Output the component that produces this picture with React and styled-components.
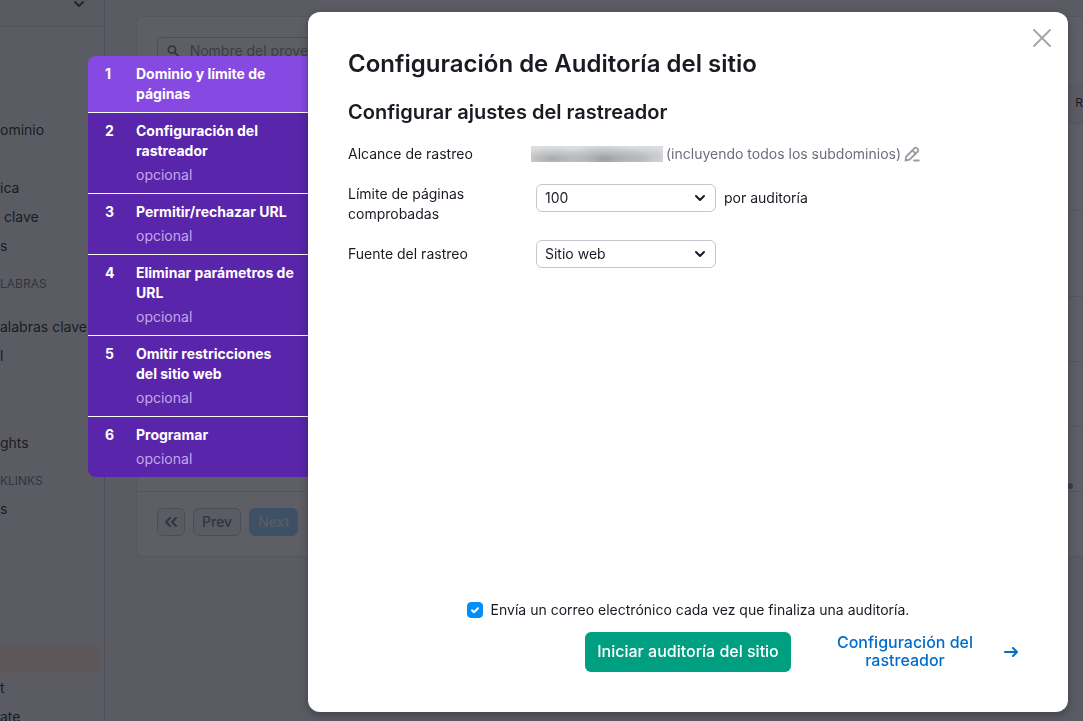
import React, { useState } from 'react';
import styled, { createGlobalStyle } from 'styled-components';

const GlobalStyle = createGlobalStyle`
  * {
    box-sizing: border-box;
  }

  body {
    margin: 0;
    overflow: hidden;
    font-family: Inter, 'Liberation Sans', sans-serif;
    font-size: 14px;
    line-height: 20px;
    color: #191b23;
  }

  button,
  select {
    font: inherit;
    color: inherit;
  }
`;

const Page = styled.div`
  display: flex;
  height: 100vh;
  overflow: hidden;
  background-color: #f4f5f9;
`;

/* ---------- page behind the dialog ---------- */

const Sidebar = styled.aside`
  flex: 0 0 105px;
  border-right: 1px solid #c4c7cf;
  overflow: hidden;
`;

const SidebarHeader = styled.div`
  display: flex;
  justify-content: flex-end;
  height: 27px;
  padding: 0 19px;
  border-bottom: 1px solid #d1d4db;
  background-color: #e9ebf2;
`;

const NavGroup = styled.nav`
  display: flex;
  flex-direction: column;
  margin-top: ${props => props.$space}px;
`;

const NavLink = styled.a`
  height: 29px;
  margin-right: 4px;
  line-height: 29px;
  white-space: pre;
  color: #191b23;
  text-decoration: none;
  border-radius: 0 6px 6px 0;
  background-color: ${props => (props.$active ? '#ffe4d8' : 'transparent')};
`;

const NavTitle = styled.span`
  height: ${props => (props.$tall ? 52 : 37)}px;
  padding-top: 16px;
  font-size: 12px;
  line-height: 15px;
  color: #6c6e79;
`;

const Main = styled.main`
  flex: 1;
  min-width: 0;
  padding: 16px 0 0 31px;
`;

const Card = styled.section`
  border: 1px solid #e0e1e9;
  border-right: 0;
  border-radius: 6px 0 0 6px;
  background-color: #fff;
`;

const SearchBox = styled.label`
  display: flex;
  align-items: center;
  gap: 10px;
  width: 240px;
  height: 28px;
  margin: 20px 20px 19px;
  padding-left: 9px;
  border: 1px solid #c4c7cf;
  border-radius: 6px;
  color: #6c6e79;
`;

const SearchInput = styled.input`
  width: 100%;
  border: 0;
  padding: 0;
  background: none;
  font: inherit;

  &::placeholder {
    color: #8a8e9b;
    opacity: 1;
  }
`;

const Projects = styled.table`
  width: 100%;
  border-collapse: collapse;
  text-align: right;

  th {
    height: 39px;
    padding: 0;
    font-size: 12px;
    font-weight: 400;
    background-color: #f4f5f9;
    border-bottom: 1px solid #e0e1e9;
  }

  td {
    padding: 0 10px 2px;
    vertical-align: bottom;
    border-bottom: 1px solid #e0e1e9;
  }
`;

const Dot = styled.span`
  display: block;
  width: 6px;
  height: 6px;
  margin-left: auto;
  border-radius: 3px;
  background-color: #8a8e9b;
`;

const Pager = styled.div`
  display: flex;
  gap: 8px;
  padding: 16px 20px 20px;
`;

const PagerButton = styled.button`
  display: flex;
  align-items: center;
  height: 28px;
  padding: 0 ${props => (props.$icon ? 6 : 8)}px;
  border: 1px solid ${props => (props.$primary ? '#8fcbff' : '#c4c7cf')};
  border-radius: 6px;
  background-color: ${props => (props.$primary ? '#8fcbff' : '#f4f5f9')};
  color: ${props => (props.$primary ? '#e8f5ff' : '#6c6e79')};
  font-weight: 500;
`;

/* ---------- dialog ---------- */

const Overlay = styled.div`
  position: fixed;
  inset: 0;
  display: flex;
  align-items: stretch;
  padding: 12px 15px 9px 88px;
  background-color: rgba(25, 27, 35, 0.7);
`;

const Steps = styled.ol`
  flex: 0 0 220px;
  align-self: flex-start;
  margin: 44px 0 0;
  padding: 0;
  list-style: none;
  border-radius: 8px 0 0 8px;
  overflow: hidden;
  color: #fff;
`;

const Step = styled.li`
  display: grid;
  grid-template-columns: 31px 1fr;
  padding: 8px 13px 8px 17px;
  font-weight: 700;
  background-color: ${props => (props.$active ? '#8649e1' : '#5925ab')};

  & + & {
    border-top: 1px solid #fff;
  }
`;

const Optional = styled.span`
  display: block;
  margin-top: 4px;
  font-weight: 400;
  color: #c5a8ea;
`;

const Panel = styled.form`
  position: relative;
  flex: 1;
  display: flex;
  flex-direction: column;
  padding: 40px;
  border-radius: 12px;
  background-color: #fff;
  box-shadow: 0 3px 8px rgba(25, 27, 35, 0.4);
`;

const CloseButton = styled.button`
  position: absolute;
  top: 16px;
  right: 16px;
  display: flex;
  padding: 0;
  border: 0;
  background: none;
  color: #a2a3a8;
`;

const Title = styled.h1`
  margin: 0 0 24px;
  font-size: 24px;
  line-height: 24px;
  font-weight: 600;
`;

const Subtitle = styled.h2`
  margin: 0 0 16px;
  font-size: 20px;
  line-height: 24px;
  font-weight: 600;
`;

const Fields = styled.div`
  display: flex;
  flex-direction: column;
  gap: 16px;
`;

const Field = styled.div`
  display: grid;
  grid-template-columns: 183px 1fr;
  align-items: ${props => (props.$top ? 'start' : 'center')};
  min-height: 28px;
`;

const FieldLabel = styled.label`
  max-width: 150px;
`;

const Scope = styled.span`
  display: flex;
  align-items: center;
  gap: 3px;
  color: #6c6e79;
`;

const HiddenDomain = styled.span`
  width: 132px;
  height: 16px;
  background:
    radial-gradient(ellipse 38px 12px at 22px 13px, #a8a9ac, transparent),
    radial-gradient(ellipse 46px 14px at 74px 13px, #9c9da1, transparent),
    radial-gradient(ellipse 30px 12px at 112px 12px, #bcbdbf, transparent),
    #dcddde;
`;

const EditButton = styled.button`
  display: flex;
  padding: 0;
  border: 0;
  background: none;
  color: #9a9ca5;
`;

const Control = styled.div`
  display: flex;
  align-items: center;
  gap: 8px;
  padding-left: 5px;
`;

const SelectWrapper = styled.span`
  display: grid;
  grid-template-columns: 1fr 26px;
  align-items: center;
  width: 180px;

  select {
    grid-area: 1 / 1 / 2 / 3;
    appearance: none;
    width: 100%;
    height: 28px;
    padding: 0 26px 0 8px;
    border: 1px solid #c4c7cf;
    border-radius: 6px;
    background-color: #fff;
  }

  svg {
    grid-area: 1 / 2;
    justify-self: start;
    margin-left: 4px;
    pointer-events: none;
  }
`;

const Footer = styled.footer`
  display: flex;
  flex-direction: column;
  gap: 12px;
  margin-top: auto;
`;

const Notify = styled.label`
  display: flex;
  justify-content: center;
  align-items: center;
  gap: 8px;
`;

const CheckWrapper = styled.span`
  display: grid;

  input {
    grid-area: 1 / 1;
    appearance: none;
    width: 16px;
    height: 16px;
    margin: 0;
    border: 1px solid #c4c7cf;
    border-radius: 4px;
  }

  input:checked {
    border-color: #008ff8;
    background-color: #008ff8;
  }

  svg {
    grid-area: 1 / 1;
    pointer-events: none;
  }
`;

const Actions = styled.div`
  display: grid;
  grid-template-columns: 1fr auto 1fr;
  align-items: center;
`;

const StartButton = styled.button`
  grid-column: 2;
  height: 40px;
  padding: 0 12px 2px;
  border: 0;
  border-radius: 6px;
  background-color: #009f81;
  color: #fff;
  font-size: 16px;
  font-weight: 500;
`;

const NextLink = styled.a`
  display: flex;
  align-items: center;
  justify-content: flex-end;
  gap: 18px;
  padding-right: 9px;
  color: #006dca;
  font-size: 16px;
  line-height: 18px;
  font-weight: 500;
  text-align: center;
  text-decoration: none;

  span {
    width: 160px;
    padding-bottom: 2px;
  }
`;

const steps = [
  { title: 'Dominio y límite de páginas' },
  { title: 'Configuración del rastreador', optional: true },
  { title: 'Permitir/rechazar URL', optional: true },
  { title: 'Eliminar parámetros de URL', optional: true },
  { title: 'Omitir restricciones del sitio web', optional: true },
  { title: 'Programar', optional: true },
];

const rowHeights = [87, 86, 65, 65, 65];

function Chevron({ color = 'currentColor' }) {
  return (
    <svg width="12" height="8" viewBox="0 0 12 8" fill="none" stroke={color} strokeWidth="2" strokeLinecap="round" strokeLinejoin="round">
      <path d="M2 2l4 4 4-4" />
    </svg>
  );
}

function Select({ id, options }) {
  return (
    <SelectWrapper>
      <select id={id}>
        {options.map(option => <option key={option}>{option}</option>)}
      </select>
      <Chevron />
    </SelectWrapper>
  );
}

function Background() {
  return (
    <>
      <Sidebar>
        <SidebarHeader>
          <Chevron color="#3a3c45" />
        </SidebarHeader>
        <NavGroup $space={88}>
          <NavLink href="#">ominio</NavLink>
          <NavLink href="#"> </NavLink>
          <NavLink href="#">ica</NavLink>
          <NavLink href="#"> clave</NavLink>
          <NavLink href="#">s</NavLink>
          <NavTitle $tall>LABRAS</NavTitle>
          <NavLink href="#">alabras clave</NavLink>
          <NavLink href="#">l</NavLink>
          <NavLink href="#"> </NavLink>
          <NavLink href="#"> </NavLink>
          <NavLink href="#">ghts</NavLink>
          <NavTitle>KLINKS</NavTitle>
          <NavLink href="#">s</NavLink>
        </NavGroup>
        <NavGroup $space={121}>
          <NavLink href="#" $active> </NavLink>
          <NavLink href="#">t</NavLink>
          <NavLink href="#">ate</NavLink>
        </NavGroup>
      </Sidebar>
      <Main>
        <Card>
          <SearchBox>
            <svg width="14" height="14" viewBox="0 0 14 14" fill="none" stroke="currentColor" strokeWidth="2" strokeLinecap="round">
              <circle cx="5.5" cy="5.5" r="4" />
              <path d="M8.7 8.7l4 4" />
            </svg>
            <SearchInput placeholder="Nombre del proyecto" />
          </SearchBox>
          <Projects>
            <thead>
              <tr><th>R</th></tr>
            </thead>
            <tbody>
              {rowHeights.map((height, index) => (
                <tr key={index}>
                  <td style={{ height }}>{index === rowHeights.length - 1 && <Dot />}</td>
                </tr>
              ))}
            </tbody>
          </Projects>
          <Pager>
            <PagerButton type="button" $icon aria-label="First page">
              <svg width="14" height="12" viewBox="0 0 14 12" fill="none" stroke="currentColor" strokeWidth="2" strokeLinecap="round" strokeLinejoin="round">
                <path d="M6 2L2 6l4 4M12 2L8 6l4 4" />
              </svg>
            </PagerButton>
            <PagerButton type="button">Prev</PagerButton>
            <PagerButton type="button" $primary>Next</PagerButton>
          </Pager>
        </Card>
      </Main>
    </>
  );
}

function App() {
  const [notify, setNotify] = useState(true);

  return (
    <Page>
      <GlobalStyle />
      <Background />
      <Overlay>
        <Steps>
          {steps.map((step, index) => (
            <Step key={step.title} $active={index === 0}>
              <span>{index + 1}</span>
              <div>
                {step.title}
                {step.optional && <Optional>opcional</Optional>}
              </div>
            </Step>
          ))}
        </Steps>
        <Panel onSubmit={event => event.preventDefault()}>
          <CloseButton type="button" aria-label="Cerrar">
            <svg width="20" height="20" viewBox="0 0 20 20" fill="none" stroke="currentColor" strokeWidth="1.8" strokeLinecap="round">
              <path d="M2 2l16 16M18 2L2 18" />
            </svg>
          </CloseButton>
          <Title>Configuración de Auditoría del sitio</Title>
          <Subtitle>Configurar ajustes del rastreador</Subtitle>
          <Fields>
            <Field>
              <span>Alcance de rastreo</span>
              <Scope>
                <HiddenDomain />
                (incluyendo todos los subdominios)
                <EditButton type="button" aria-label="Editar">
                  <svg width="16" height="16" viewBox="0 0 16 16" fill="none" stroke="currentColor" strokeWidth="1.8" strokeLinejoin="round" strokeLinecap="round">
                    <path d="M1.5 14.5l.8-4L10.5 2.2a1.6 1.6 0 0 1 2.3 0l1 1a1.6 1.6 0 0 1 0 2.3L5.5 13.7z" />
                    <path d="M8.5 4.5l3 3M10 14.5h4.8" />
                  </svg>
                </EditButton>
              </Scope>
            </Field>
            <Field $top>
              <FieldLabel htmlFor="limit">Límite de páginas comprobadas</FieldLabel>
              <Control>
                <Select id="limit" options={['100', '500', '1000']} />
                por auditoría
              </Control>
            </Field>
            <Field>
              <FieldLabel htmlFor="source">Fuente del rastreo</FieldLabel>
              <Control>
                <Select id="source" options={['Sitio web']} />
              </Control>
            </Field>
          </Fields>
          <Footer>
            <Notify>
              <CheckWrapper>
                <input type="checkbox" checked={notify} onChange={event => setNotify(event.target.checked)} />
                {notify && (
                  <svg width="16" height="16" viewBox="0 0 16 16" fill="none" stroke="#fff" strokeWidth="2" strokeLinecap="round" strokeLinejoin="round">
                    <path d="M5 8.2l2 2 4-4" />
                  </svg>
                )}
              </CheckWrapper>
              Envía un correo electrónico cada vez que finaliza una auditoría.
            </Notify>
            <Actions>
              <StartButton type="submit">Iniciar auditoría del sitio</StartButton>
              <NextLink href="#">
                <span>Configuración del rastreador</span>
                <svg width="16" height="12" viewBox="0 0 16 12" fill="none" stroke="currentColor" strokeWidth="2" strokeLinecap="round" strokeLinejoin="round">
                  <path d="M2 6h12M10 2l4 4-4 4" />
                </svg>
              </NextLink>
            </Actions>
          </Footer>
        </Panel>
      </Overlay>
    </Page>
  );
}

export default App;
